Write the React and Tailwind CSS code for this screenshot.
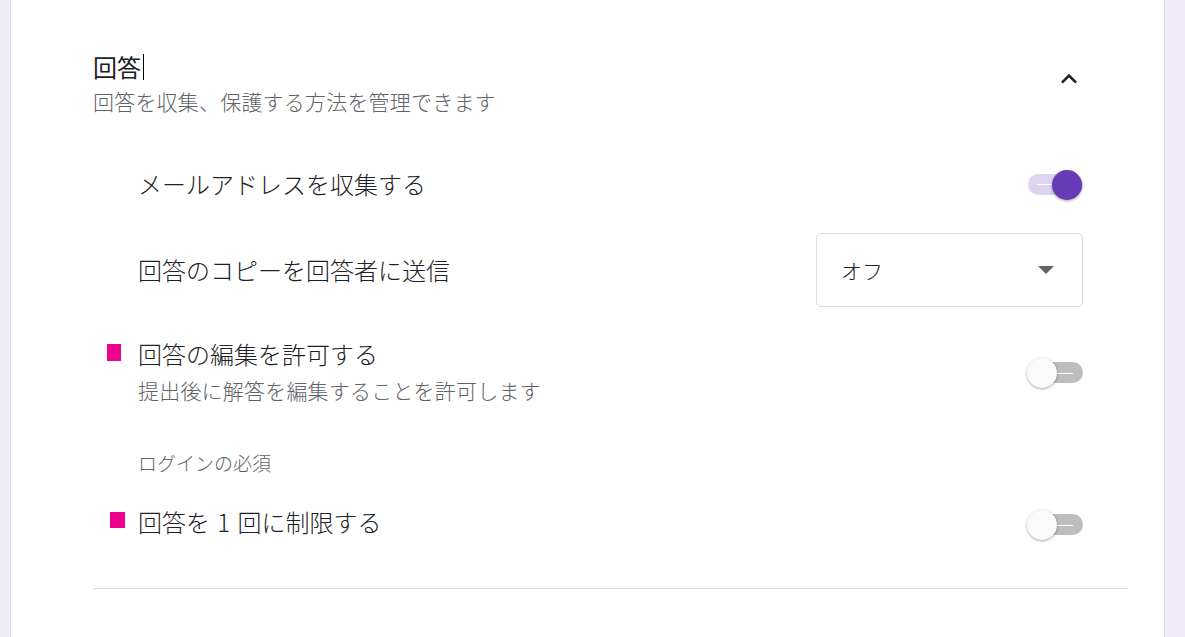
function Toggle({ on }) {
  return (
    <div className="relative w-[56px] h-[30px] shrink-0">
      <div
        className={`absolute left-[1px] right-0 top-[4px] h-[21px] rounded-full ${
          on ? "bg-[#ddd5ef]" : "bg-[#bdbdbd]"
        }`}
      />
      {on ? (
        <div className="absolute left-[10px] top-[14px] w-[17px] h-px bg-white" />
      ) : (
        <div className="absolute left-[30px] top-[15px] w-[16px] h-px bg-white" />
      )}
      <div
        className={`absolute top-0 w-[30px] h-[30px] rounded-full shadow-[0_1px_3px_rgba(0,0,0,0.35)] ${
          on ? "right-[1px] bg-[#673ab7]" : "left-0 bg-[#fafafa]"
        }`}
      />
    </div>
  );
}

function Marker({ className }) {
  return <div className={`absolute bg-[#ec008c] ${className}`} />;
}

export default function App() {
  return (
    <div className="h-[637px] w-full bg-[#f0ebf8] pl-[10px] pr-[20px] overflow-hidden font-light font-['Noto_Sans_CJK_JP','Noto_Sans',sans-serif]">
      <div className="h-full bg-white border-x border-[#dadce0] pl-[82px] pr-[36px]">
        {/* Header */}
        <div className="flex justify-between items-start pt-[51px] pr-[43px]">
          <div>
            <div className="flex items-center text-[24px] leading-[32px] text-[#202124] font-normal">
              回答
              <span className="ml-[2px] inline-block w-px h-[26px] bg-black" />
            </div>
            <p className="mt-[3px] text-[21px] leading-[30px] tracking-[0.2px] text-[#5f6368]">
              回答を収集、保護する方法を管理できます
            </p>
          </div>
          <svg
            viewBox="0 0 24 24"
            className="w-[32px] h-[32px] mt-[12px] fill-[#202124]"
          >
            <path d="M7.41 15.41L12 10.83l4.59 4.58L18 14l-6-6-6 6z" />
          </svg>
        </div>

        {/* Collect emails */}
        <div className="mt-[44px] h-[48px] flex items-center justify-between pl-[45px] pr-[45px]">
          <span className="text-[24px] leading-[32px] text-[#202124]">
            メールアドレスを収集する
          </span>
          <div className="mt-[2px]">
            <Toggle on />
          </div>
        </div>

        {/* Send copy */}
        <div className="mt-[25px] flex items-center justify-between pl-[45px] pr-[45px]">
          <span className="text-[24px] leading-[32px] text-[#202124]">
            回答のコピーを回答者に送信
          </span>
          <div className="w-[267px] h-[74px] border border-[#dadce0] rounded-[5px] flex items-center justify-between pl-[24px] pr-[28px]">
            <span className="text-[21px] leading-[30px] text-[#202124]">オフ</span>
            <svg viewBox="0 0 16 8" className="w-[16px] h-[8px] fill-[#5f6368]">
              <path d="M0 0h16L8 8z" />
            </svg>
          </div>
        </div>

        {/* Allow edit */}
        <div className="relative mt-[31px] flex items-center justify-between pl-[45px] pr-[45px]">
          <Marker className="left-[14px] top-[6px] w-[14px] h-[17px]" />
          <div>
            <div className="text-[24px] leading-[32px] text-[#202124]">
              回答の編集を許可する
            </div>
            <div className="mt-[5px] text-[21px] leading-[30px] tracking-[0.2px] text-[#5f6368]">
              提出後に解答を編集することを許可します
            </div>
          </div>
          <div className="mt-[3px]">
            <Toggle />
          </div>
        </div>

        {/* Login required */}
        <div className="mt-[44px] pl-[45px] text-[19px] leading-[28px] text-[#5f6368]">
          ログインの必須
        </div>

        {/* Limit to one */}
        <div className="relative mt-[29px] flex items-start justify-between pl-[45px] pr-[45px]">
          <Marker className="left-[17px] top-[6px] w-[15px] h-[16px]" />
          <span className="text-[24px] leading-[32px] text-[#202124]">
            回答を <span className="px-[2px]">1</span> 回に制限する
          </span>
          <div className="mt-[4px]">
            <Toggle />
          </div>
        </div>

        <div className="mt-[48px] h-px bg-[#dadce0]" />
      </div>
    </div>
  );
}
